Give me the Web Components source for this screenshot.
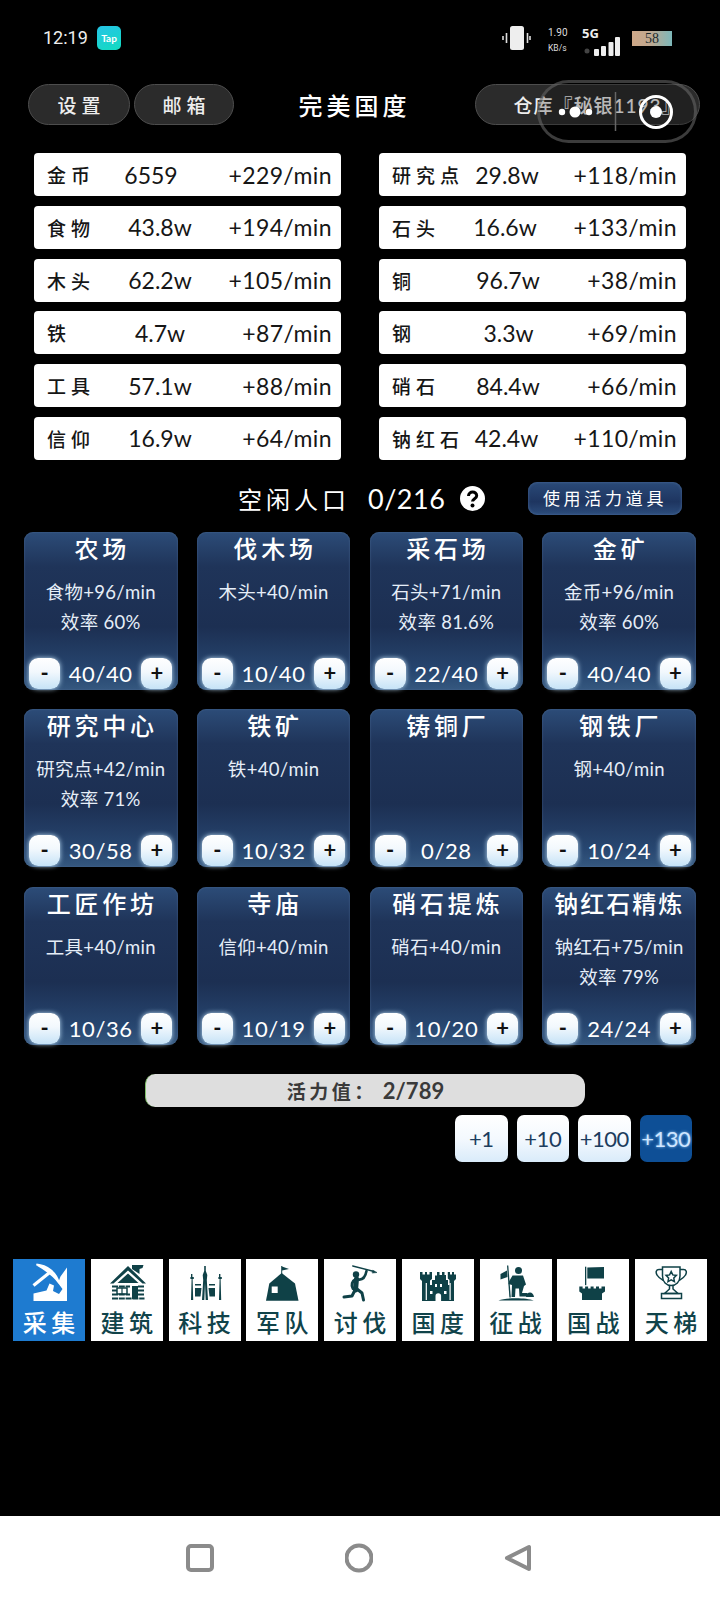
<!DOCTYPE html>
<html lang="zh"><head><meta charset="utf-8"><title>完美国度</title>
<style>
html,body{margin:0;padding:0;background:#000}
body{width:720px;height:1600px;overflow:hidden;font-family:Lato,"Noto Sans CJK SC",sans-serif;color:#fff}
</style></head><body>
<game-app>
<status-bar></status-bar>
<top-bar title="完美国度" store="仓库『秘银1193』"></top-bar>
<res-grid>
<res-row name="金币" val="6559" rate="+229/min" shift="18"></res-row><res-row name="研究点" val="29.8w" rate="+118/min" pl="4"></res-row>
<res-row name="食物" val="43.8w" rate="+194/min"></res-row><res-row name="石头" val="16.6w" rate="+133/min"></res-row>
<res-row name="木头" val="62.2w" rate="+105/min"></res-row><res-row name="铜" val="96.7w" rate="+38/min" pl="6"></res-row>
<res-row name="铁" val="4.7w" rate="+87/min"></res-row><res-row name="钢" val="3.3w" rate="+69/min" pl="7"></res-row>
<res-row name="工具" val="57.1w" rate="+88/min"></res-row><res-row name="硝石" val="84.4w" rate="+66/min" pl="6"></res-row>
<res-row name="信仰" val="16.9w" rate="+64/min"></res-row><res-row name="钠红石" val="42.4w" rate="+110/min" pl="3"></res-row>
</res-grid>
<pop-row idle="0/216" action="使用活力道具"></pop-row>
<card-grid>
<bld-card name="农场" count="40/40"><span>食物+96/min</span><span>效率 60%</span></bld-card>
<bld-card name="伐木场" count="10/40"><span>木头+40/min</span></bld-card>
<bld-card name="采石场" count="22/40"><span>石头+71/min</span><span>效率 81.6%</span></bld-card>
<bld-card name="金矿" count="40/40"><span>金币+96/min</span><span>效率 60%</span></bld-card>
<bld-card name="研究中心" count="30/58"><span>研究点+42/min</span><span>效率 71%</span></bld-card>
<bld-card name="铁矿" count="10/32"><span>铁+40/min</span></bld-card>
<bld-card name="铸铜厂" count="0/28"></bld-card>
<bld-card name="钢铁厂" count="10/24"><span>钢+40/min</span></bld-card>
<bld-card name="工匠作坊" count="10/36"><span>工具+40/min</span></bld-card>
<bld-card name="寺庙" count="10/19"><span>信仰+40/min</span></bld-card>
<bld-card name="硝石提炼" count="10/20"><span>硝石+40/min</span></bld-card>
<bld-card name="钠红石精炼" count="24/24" tight><span>钠红石+75/min</span><span>效率 79%</span></bld-card>
</card-grid>
<vit-bar label="活力值：" value="2/789"></vit-bar>
<boost-row></boost-row>
<tab-bar>
<nav-tab label="采集" icon="gather" active></nav-tab><nav-tab label="建筑" icon="cabin"></nav-tab><nav-tab label="科技" icon="tech"></nav-tab><nav-tab label="军队" icon="tent"></nav-tab><nav-tab label="讨伐" icon="runner"></nav-tab><nav-tab label="国度" icon="castle"></nav-tab><nav-tab label="征战" icon="soldier"></nav-tab><nav-tab label="国战" icon="tower"></nav-tab><nav-tab label="天梯" icon="trophy"></nav-tab>
</tab-bar>
<sys-nav></sys-nav>
<mini-capsule></mini-capsule>
</game-app>
<script>
const CJK='Lato,"Noto Sans CJK SC",sans-serif';
function def(name,css,html){
  customElements.define(name,class extends HTMLElement{
    connectedCallback(){
      if(this.shadowRoot)return;
      const r=this.attachShadow({mode:'open'});
      const a=n=>this.getAttribute(n)||'';
      r.innerHTML='<style>'+css(a,this)+'</style>'+html(a,this);
    }
  });
}
def('game-app',()=>`:host{display:flex;flex-direction:column;position:relative;width:720px;height:1600px;background:#000;font-family:${CJK};overflow:hidden}`,()=>'<slot></slot>');

def('status-bar',()=>`:host{display:flex;align-items:flex-start;height:84px;flex:none;box-sizing:border-box;padding:26px 48px 0 43px;font-family:Roboto,sans-serif;color:#eee}
.t{font-size:18px;line-height:24px;width:54px}
.tap{width:24px;height:24px;border-radius:5px;background:linear-gradient(160deg,#25c4e6,#12dcc0);font:700 10px/24px Lato,sans-serif;text-align:center;color:#fff}
.sp{flex:1}
.vib{width:29px;height:24px;margin-right:17px}
.net{width:34px;display:flex;flex-direction:column;font-size:10px;line-height:14px;color:#ddd}
.net b{font-weight:400;font-size:8.500px;line-height:14px;margin-top:1px}
.sig{width:50px;display:flex;flex-direction:column;padding-left:0}
.sig b{font:700 13px/14px "Noto Sans",sans-serif;color:#eee}
.sig svg{margin-top:-6px;margin-left:2px}
.bat{width:40px;height:15px;margin-top:5px;background:linear-gradient(90deg,#cfa888,#c0a890 45%,#7db8ba);color:#1c2a2c;font:400 14px/15px "Liberation Serif",serif;text-align:center}`,
()=>`<div class="t">12:19</div><div class="tap">Tap</div><div class="sp"></div>
<svg class="vib" viewBox="0 0 29 24"><rect x="8" y="0" width="14" height="24" rx="2.5" fill="#eee"/><path d="M4.5 7v10M1 10v4M25.500 7v10M28 10v4" stroke="#ddd" stroke-width="1.600" fill="none"/></svg>
<div class="net">1.90<b>KB/s</b></div>
<div class="sig"><b>5G</b><svg width="36" height="22" viewBox="0 0 36 22"><circle cx="3" cy="17" r="2.500" fill="#444"/><rect x="10" y="15" width="5" height="7" rx="1" fill="#eee"/><rect x="17" y="12" width="5" height="10" rx="1" fill="#eee"/><rect x="24.500" y="8" width="5" height="14" rx="1" fill="#eee"/><rect x="31" y="3" width="5" height="19" rx="1" fill="#eee"/></svg></div>
<div class="bat">58</div>`);

def('pill-btn',()=>`:host{display:flex;align-items:center;justify-content:center;height:41px;box-sizing:border-box;padding-left:5px;border-radius:21px;background:#2b2b2b;border:1px solid #4d4d4d;color:#eee;font-size:19px;letter-spacing:5px;font-weight:500;white-space:nowrap;overflow:hidden}`,()=>'<slot></slot>');

def('top-bar',()=>`:host{display:flex;align-items:center;flex:none;height:41px;padding:0 20px 0 28px}
.a{width:102px}.b{width:100px;margin-left:4px}
h1{flex:1;margin:0;text-align:center;font-size:24px;font-weight:500;letter-spacing:4px;color:#fff}
.c{width:225px;letter-spacing:1px;padding-left:20px}`,
a=>`<pill-btn class="a">设置</pill-btn><pill-btn class="b">邮箱</pill-btn><h1>${a('title')}</h1><pill-btn class="c">${a('store')}</pill-btn>`);

def('res-grid',()=>`:host{display:grid;grid-template-columns:307px 307px;column-gap:38px;row-gap:9.75px;flex:none;margin:28px 0 0 34px}`,()=>'<slot></slot>');

def('res-row',a=>`:host{display:grid;grid-template-columns:73px 80px 1fr;align-items:center;height:43px;box-sizing:border-box;padding:0 9px 0 13px;background:#fff;border-radius:4px;color:#161616;font-size:23px;white-space:nowrap}
.n{font-size:19px;letter-spacing:5px;font-weight:500}
.v{text-align:center;padding-right:${a('shift')||0}px;padding-left:${a('pl')||0}px}
.r{text-align:right;letter-spacing:.4px}`,
a=>`<span class="n">${a('name')}</span><span class="v">${a('val')}</span><span class="r">${a('rate')}</span>`);

def('pop-row',()=>`:host{display:flex;align-items:center;flex:none;height:33px;margin-top:22px;padding-left:238px;color:#fff}
.l{font-size:24px;letter-spacing:4px;width:130px;font-weight:400}
.v{font-size:27px;width:92px;letter-spacing:.5px}
svg{width:25px;height:25px;margin-right:43px}
button{all:unset;box-sizing:border-box;width:154px;height:33px;border-radius:9px;background:linear-gradient(#2a4a78,#1e3560 60%,#2c4d7c);color:#fff;text-align:center;font:400 17px/33px ${CJK};letter-spacing:3.700px;box-shadow:inset 0 0 3px #4a6a98}`,
a=>`<span class="l">空闲人口</span><span class="v">${a('idle')}</span>
<svg viewBox="0 0 25 25"><circle cx="12.500" cy="12.500" r="12.500" fill="#fff"/><path d="M8.500 10c0-5.200 8.200-5.200 8.200-.3 0 3-4.200 2.900-4.200 5.800" fill="none" stroke="#000" stroke-width="3"/><circle cx="12.500" cy="19.500" r="2" fill="#000"/></svg>
<button>${a('action')}</button>`);

def('card-grid',()=>`:host{display:grid;grid-template-columns:repeat(4,153.500px);grid-auto-rows:158px;column-gap:19.300px;row-gap:19.500px;flex:none;margin:17px 0 0 24px}`,()=>'<slot></slot>');

def('bld-card',(a,el)=>`:host{display:flex;flex-direction:column;box-sizing:border-box;padding-bottom:1px;border-radius:9px;color:#fff;
background:linear-gradient(#2c4c78,#1f3459 22%,#1c2f52 60%,#274670 88%,#35587f);box-shadow:inset 0 0 2px #4e6c94}
.t{text-align:center;font-size:24px;line-height:34px;font-weight:500;letter-spacing:${el.hasAttribute('tight')?'2px':'3.800px'};white-space:nowrap;padding-left:${el.hasAttribute('tight')?'0':'3px'}}
.i{display:flex;flex-direction:column;align-items:center;margin-top:11px;font-size:18.500px;line-height:30px;letter-spacing:.3px;color:#e6eef8;white-space:nowrap}
::slotted(span){display:block;line-height:30px}
.f{margin-top:auto;display:flex;align-items:center;justify-content:space-between;padding:0 5px;height:31px}
.c{font-size:22px;letter-spacing:.6px}
.b{width:31px;height:31px;border-radius:9px;background:linear-gradient(#fff,#f2f8fd 45%,#c6e3f7);box-shadow:0 0 5px #bcdcf4;color:#111;font:700 22px/29px ${CJK};text-align:center}`,
a=>`<div class="t">${a('name')}</div><div class="i"><slot></slot></div><div class="f"><div class="b">-</div><div class="c">${a('count')}</div><div class="b">+</div></div>`);

def('vit-bar',()=>`:host{display:block;flex:none;width:440px;height:33px;box-sizing:border-box;margin:29px 0 0 145px;background:#dedede;border-radius:10px 12px 12px 10px;border-left:1px solid #7fbf6a;color:#3a3a3a;text-align:center;font-size:22px;line-height:33px;font-weight:700;white-space:nowrap}
.l{letter-spacing:3.500px;font-size:19px;margin-right:6px}`,
a=>`<span class="l">${a('label')}</span><span>${a('value')}</span>`);

def('boost-row',()=>`:host{display:flex;justify-content:flex-end;gap:9px;flex:none;height:47px;margin-top:8px;padding-right:28px}
div{width:52.500px;height:47px;border-radius:7px;background:linear-gradient(#fff,#f4f9fe 50%,#d9ebfa);color:#1c3d5e;font-size:22px;line-height:47px;text-align:center;letter-spacing:-.5px;white-space:nowrap}
.on{background:#0e4f96;color:#cfe6ff;text-shadow:0 0 3px #9cd0ff}`,
()=>`<div>+1</div><div>+10</div><div>+100</div><div class="on">+130</div>`);

def('tab-bar',()=>`:host{display:grid;grid-template-columns:repeat(9,72px);column-gap:5.750px;flex:none;margin:97px 0 0 13px;height:82px}`,()=>'<slot></slot>');

const ICONS={
gather:`<g fill="#fff"><path d="M54 8.500V42H20.500V34.500L33.500 31.500 36.500 24.500 41 26.500 40 32 46 35 49.500 30 45 24 47.500 17.500z"/><path d="M20.500 26.500 38.500 12" stroke="#fff" stroke-width="3.200" fill="none"/><path d="M23.500 5.500C34 6.500 43 13 46 24 41 16.500 33 11 23.500 5.500z" stroke="#fff" stroke-width="1.800"/></g>`,
cabin:`<g fill="#0f4147"><path d="M41 6h11.500l-1 3-3 1v5l-7.500-5z"/><path d="M37 7 19 24.500h3.500L37 11.500 51.500 24.500H55z"/><path d="M37 14.500 26.500 24h21z"/><g stroke="#0f4147" stroke-width="2"><path d="M21 27.500H39M21 31.500H26M21 35.500H39M21 39.500H53.500M47 27.500H53.500M47 31.500H53.500M47 35.500H53.500" stroke-dasharray="6 .8" fill="none"/></g><rect x="41" y="27" width="6" height="13"/><rect x="26" y="29" width="10" height="6" fill="none" stroke="#0f4147" stroke-width="1.500"/><path d="M31 29v6" stroke="#0f4147" stroke-width="1.200"/></g>`,
tech:`<g fill="#0f4147"><path d="M35.200 7h1.600v5l1.500 4-.5 5 1.200 20h-2.300L36 24l-.7 17H33l1.200-20-.5-5 1.500-4z"/><path d="M22 15h1.400v3h1.400v2h-1.200l.6 21h-2.200l.6-21h-1.200v-2H22z"/><path d="M50 15h1.400v3h1.400v2h-1.200l.6 21h-2.200l.6-21h-1.200v-2H50z"/><path d="M26 29h6.500l-1 8.500h-5.500zM39.500 29H46v8.500h-5.500z"/><path d="M26 25h6v1.500h-6zM40 25h6v1.500h-6z"/></g>`,
tent:`<g fill="#0f4147"><path d="M35.200 7h1v8h-1z"/><path d="M36 7.500 43 10 36 11.500z"/><path d="M35.700 14 49 24.500 52.500 41.700H20L23.300 24.500z"/></g><rect x="25.700" y="27.500" width="6" height="6.500" fill="#fff"/>`,
runner:`<g fill="none" stroke="#0f4147" stroke-linecap="round" stroke-linejoin="round"><path d="M28.700 7 50 12.500" stroke-width="1.300"/><path d="M49 11.500 53 13.500 48.500 14z" fill="#0f4147" stroke-width=".6"/><path d="M34 20.500C37 21 41 20 42.500 12" stroke-width="2.600"/><path d="M32 20C28 22 27 26 29 29.500L33 31" stroke-width="3"/><path d="M32.500 20 31.500 31" stroke-width="5"/><path d="M33 30 38 34 39.500 41" stroke-width="3"/><path d="M31 31 28 37 20 38" stroke-width="3"/></g><circle cx="32" cy="15.500" r="3.200" fill="#0f4147"/>`,
castle:`<g fill="#0f4147"><path d="M18 13h2.500v2.500h2.500V13h2v2.500h2.500V13H30v7l-2 1.500V26h2V21h3V16.500h2V13h2.500v3H40v-3h2.500v3H44V21h2v5h1.500V21l-1.700-1.500V13H48v2.500h2V13h2v2.500h2V13v7l-2 2v20H20V22l-2-2z"/></g><g fill="#fff"><rect x="33" y="25" width="2" height="3"/><rect x="38" y="25" width="2" height="3"/><rect x="28" y="32" width="2.500" height="3"/><rect x="42" y="32" width="2.500" height="3"/><path d="M33.500 42v-5a2.800 2.800 0 0 1 5.600 0v5z"/><rect x="23.700" y="24" width="1.200" height="17"/><rect x="47.500" y="24" width="1.200" height="17"/></g>`,
soldier:`<g fill="#0f4147"><path d="M27 6.500h1.300l2.500 32h-1.400z"/><path d="M27 11.500 20.500 15v5.500L27.500 18z"/><circle cx="38.500" cy="11.500" r="3.500"/><path d="M32.500 16.500H43L46 25.500 44 27 42 34H47.500L48 37.500H39.500L39 29.500 35.500 29.500 35 38H31.500L32 26 28.500 25 29 22.500z"/><path d="M46 38c0-3 2-4.500 4-4.500s3.500 1.500 4 4.500z"/><path d="M18.500 41.500C26 38.500 46 38.500 53.700 41.500z"/></g>`,
tower:`<g fill="#0f4147"><rect x="28" y="7.700" width="1.300" height="18.500"/><path d="M30.300 8.500 47 8v11.500H30.300z"/><path d="M22.300 27.500h3.300v2h2.500v-2h3v2h2.500v-2h3v2H39v-2h3v2h2.500v-2H48v5l-3 2V41H25V34.500l-2.700-2z"/></g>`,
trophy:`<g fill="none" stroke="#0f4147" stroke-width="1.500"><path d="M27.500 8H45V17C45 23 41 26.500 36.200 26.500S27.500 23 27.500 17z"/><path d="M27.500 10.500H24c-3 0-3.500 3-2 5.500 1.500 2.700 4 4 6.500 5.500M45 10.500h3.500c3 0 3.500 3 2 5.500-1.500 2.700-4 4-6.500 5.500"/><path d="M34.500 26.500V30L29.500 34.500H43L38 30V26.500"/><rect x="26.500" y="34.500" width="20" height="5"/><path d="M36.200 12.500l1.600 3.400 3.600.5-2.600 2.600.6 3.600-3.200-1.700-3.200 1.700.6-3.600-2.600-2.600 3.600-.5z"/></g>`
};
def('nav-tab',(a,el)=>{const on=el.hasAttribute('active');return `:host{display:flex;flex-direction:column;align-items:center;height:82px;background:${on?'#1e7bd0':'#fff'};color:${on?'#fff':'#10434a'};overflow:hidden}
svg{width:72px;height:47px;flex:none}
span{font-size:24px;line-height:33px;letter-spacing:4.500px;padding-left:4.500px;font-weight:500;white-space:nowrap}`},
a=>`<svg viewBox="0 0 72 47">${ICONS[a('icon')]}</svg><span>${a('label')}</span>`);

def('sys-nav',()=>`:host{display:flex;align-items:center;flex:none;height:84px;margin-top:175px;background:#fff;justify-content:space-between;box-sizing:border-box;padding:0 188px 0 186px}
svg{width:28px;height:30px;fill:none;stroke:#8b8b8b;stroke-width:4;stroke-linejoin:round}`,
()=>`<svg viewBox="0 0 28 30"><rect x="2" y="3" width="24" height="24" rx="3"/></svg><svg viewBox="0 0 28 30"><circle cx="14" cy="15" r="12.500"/></svg><svg viewBox="0 0 28 30"><path d="M25 4V26L3 15z"/></svg>`);

def('mini-capsule',()=>`:host{position:absolute;left:537px;top:80px;width:160px;height:63px;box-sizing:border-box;border:3px solid rgba(110,110,110,.55);border-radius:32px;background:rgba(0,0,0,.22)}
svg{position:absolute;left:-3px;top:-3px;width:160px;height:63px}`,
()=>`<svg viewBox="0 0 160 63"><circle cx="25" cy="32" r="3.200" fill="#fff"/><circle cx="38" cy="32" r="5.500" fill="#fff"/><circle cx="52" cy="32" r="3.200" fill="#fff"/><path d="M78.500 12V51" stroke="#666" stroke-width="1.500"/><circle cx="119" cy="32" r="15.500" fill="none" stroke="#fff" stroke-width="3"/><circle cx="119" cy="32" r="6" fill="#fff"/></svg>`);
</script>
</body></html>
